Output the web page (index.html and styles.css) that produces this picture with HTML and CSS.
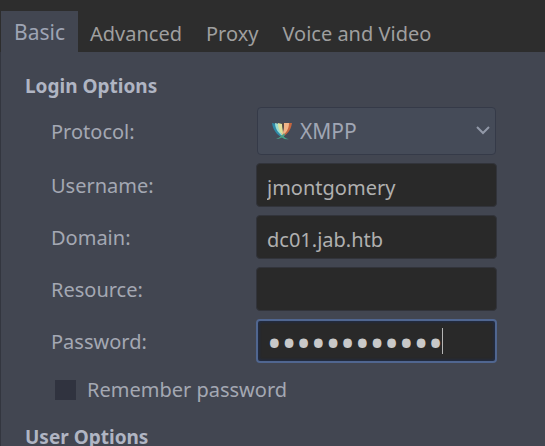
FILE: index.html
```html
<!DOCTYPE html>
<html lang="en">
<head>
<meta charset="utf-8">
<title>Account</title>
<link rel="stylesheet" href="styles.css">
</head>
<body>
<div class="tabs" role="tablist">
  <button class="tab tab-active" role="tab" aria-selected="true">Basic</button>
  <button class="tab" role="tab">Advanced</button>
  <button class="tab" role="tab">Proxy</button>
  <button class="tab" role="tab">Voice and Video</button>
</div>
<main class="panel">
  <h2 class="heading">Login Options</h2>
  <form class="form">
    <label class="label" for="protocol">Protocol:</label>
    <div class="combo">
      <select class="select" id="protocol"><option>XMPP</option></select>
      <svg class="logo" viewBox="0 0 22 20" aria-hidden="true">
        <path fill="#2f8ba8" d="M1 2 6 3C6 9 9 14 16 18 8 17 2 10 1 2Z"/>
        <path fill="#9adcd2" d="M4 2 8 3C8 8 10 12 13 16 8 13 4 8 4 2Z"/>
        <path fill="#dde09c" d="M7 2 11 3 13 15C9 12 7 8 7 2Z"/>
        <path fill="#c4663f" d="M21 2 15 2C15 9 12 14 8 17 15 15 20 10 21 2Z"/>
        <path fill="#f0b488" d="M18 2 13 2C13 8 12 11 11 15 15 12 18 8 18 2Z"/>
        <path fill="#59493f" d="M11 2 13 2 12 12Z"/>
        <path fill="#47a387" d="M5 18C10 16 12 14 13 12L14 14C12 16 9 18 5 18ZM11 14C13 16 15 18 18 18 14 19 11 17 10 15Z"/>
      </svg>
      <svg class="arrow" viewBox="0 0 14 10" aria-hidden="true"><path d="M1 2 7 8 13 2"/></svg>
    </div>
    <label class="label" for="username">Username:</label>
    <input class="field" id="username" type="text" value="jmontgomery" spellcheck="false">
    <label class="label" for="domain">Domain:</label>
    <input class="field" id="domain" type="text" value="dc01.jab.htb" spellcheck="false">
    <label class="label" for="resource">Resource:</label>
    <input class="field" id="resource" type="text">
    <label class="label" for="password">Password:</label>
    <div class="secret">
      <input class="field field-focus" id="password" type="password" value="••••••••••••">
      <span class="caret"></span>
    </div>
  </form>
  <div class="remember">
    <input class="check" id="remember" type="checkbox">
    <label for="remember">Remember password</label>
  </div>
  <h2 class="heading">User Options</h2>
</main>
</body>
</html>
```
FILE: styles.css
```css
* {
  box-sizing: border-box;
}

body {
  margin: 0;
  min-height: 100vh;
  display: flex;
  flex-direction: column;
  background: #2d2d2d;
  color: #a4a8b3;
  font: 20px/28px "Noto Sans", sans-serif;
}

.tabs {
  display: flex;
  padding: 11px 0 0 1px;
}

.tab {
  height: 41px;
  padding: 4px 12px 0;
  border: 0;
  background: none;
  color: #9f9f9f;
  font: inherit;
  white-space: nowrap;
}

.tab-active {
  padding: 0 13px;
  background: #424651;
  color: #9ea4b4;
  font-size: 21px;
}

.panel {
  flex: 1;
  padding: 20px 48px 0 24px;
  border-left: 1px solid #33363f;
  background: #424651;
}

.heading {
  margin: 0;
  color: #b0b5c3;
  font-size: 19px;
  font-weight: 700;
  line-height: 28px;
}

.form {
  display: grid;
  grid-template-columns: 205px 1fr;
  row-gap: 8px;
  align-items: center;
  padding: 7px 0 0 26px;
}

.label {
  padding-top: 2px;
}

.combo,
.secret {
  position: relative;
}

.combo {
  margin: 0 1px;
}

.select,
.field {
  display: block;
  width: 100%;
  height: 44px;
  padding: 4px 10px 0;
  border: 1px solid #32343b;
  border-radius: 4px;
  background: #292929;
  color: #b0b0b0;
  font: inherit;
  outline: none;
}

.select {
  height: 48px;
  padding: 0 42px;
  appearance: none;
  border-color: #353a48;
  background: #454b58;
  color: #a0a6b4;
  font-size: 21px;
}

.logo {
  position: absolute;
  top: 14px;
  left: 14px;
  width: 22px;
  height: 20px;
}

.arrow {
  position: absolute;
  top: 18px;
  right: 6px;
  width: 14px;
  height: 10px;
  fill: none;
  stroke: #9299a8;
  stroke-width: 2;
}

.field-focus {
  padding: 0 9px;
  border: 2px solid #506690;
  box-shadow: inset 0 0 3px 1px #202d4b;
  color: #c9c9c9;
  font: 39px/38px "Noto Sans", sans-serif;
}

.caret {
  position: absolute;
  top: 9px;
  left: 186px;
  width: 1px;
  height: 26px;
  background: #b5b5b5;
}

.remember {
  display: flex;
  align-items: center;
  gap: 11px;
  padding: 13px 0 19px 30px;
}

.check {
  width: 21px;
  height: 20px;
  margin: 0;
  appearance: none;
  background: #30333f;
}
```
